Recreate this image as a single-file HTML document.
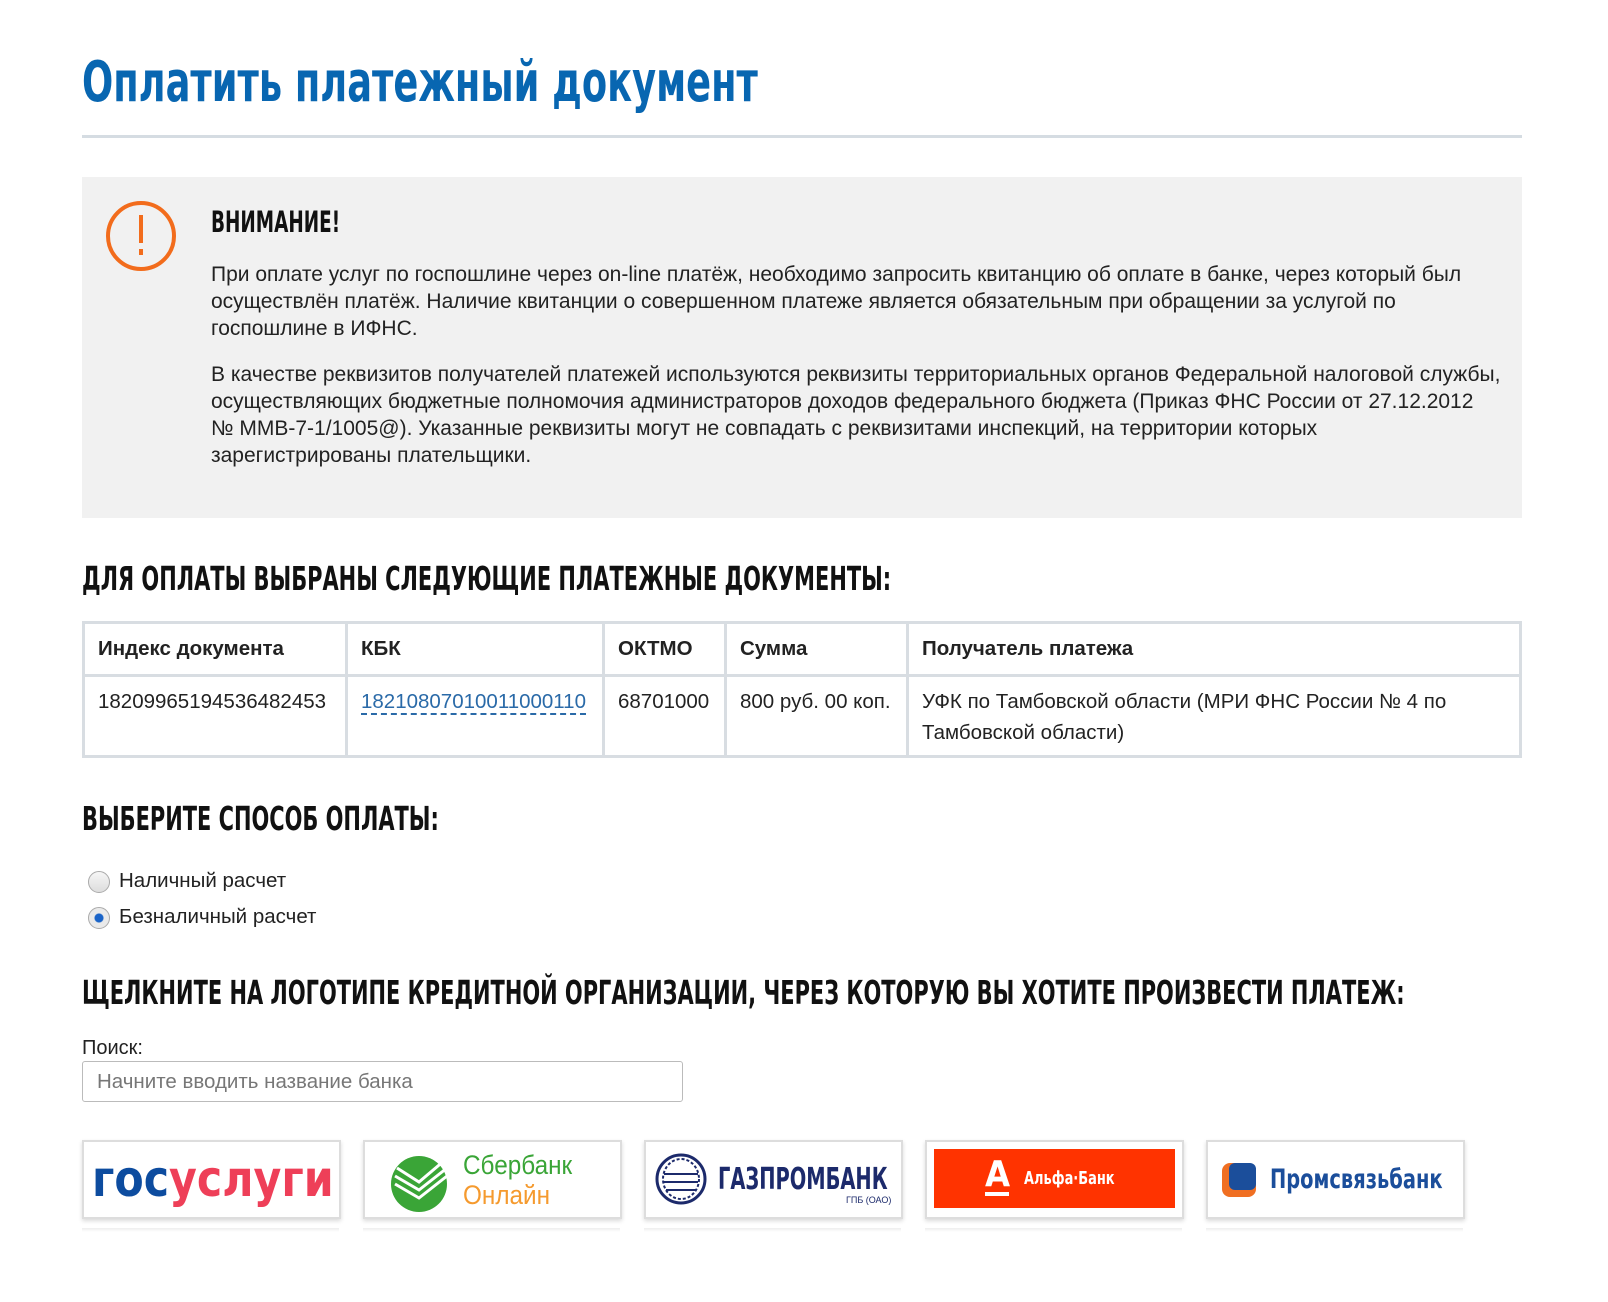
<!DOCTYPE html>
<html><head><meta charset="utf-8"><style>
body{margin:0;background:#fff;width:1608px;height:1302px;position:relative;font-family:"Liberation Sans",sans-serif;color:#222;overflow:hidden}
.a{position:absolute}
.cond{font-family:"DejaVu Sans Condensed","DejaVu Sans",sans-serif;font-weight:bold;transform-origin:0 0;white-space:nowrap}
h1{margin:0;color:#0866b1;font-size:56px;transform:scaleX(0.73)}
.h2{font-size:33px;color:#111;transform:scaleX(0.705)}
p{margin:0;font-size:21px;line-height:27px;color:#222;white-space:nowrap}
table{border-collapse:collapse;font-size:20.5px;table-layout:fixed}
td{border:3px solid #d8dde2;padding:0 13px;vertical-align:top;white-space:nowrap}
.logo{position:absolute;top:1140px;width:255px;height:75px;border:2px solid #ddd;box-shadow:0 2px 4px rgba(0,0,0,.15);background:#fff;overflow:hidden}
.ghost{position:absolute;top:1228px;width:257px;height:4px;background:linear-gradient(#eee,#fff)}
</style></head><body>
<h1 class="a cond" style="left:82px;top:50px">Оплатить платежный документ</h1>
<div class="a" style="left:82px;top:135px;width:1440px;height:3px;background:#d5dce2"></div>
<div class="a" style="left:82px;top:177px;width:1440px;height:341px;background:#f1f1f1"></div>
<svg class="a" style="left:104px;top:199px" width="74" height="74"><circle cx="37" cy="37" r="33" fill="none" stroke="#f26c1c" stroke-width="4"/><rect x="35" y="16" width="4" height="28" fill="#f26c1c"/><rect x="35" y="50" width="4" height="6" fill="#f26c1c"/></svg>
<div class="a cond h2" style="left:211px;top:205px;font-size:29px">ВНИМАНИЕ!</div>
<div class="a" style="left:211px;top:261px;width:1300px">
<p>При оплате услуг по госпошлине через on-line платёж, необходимо запросить квитанцию об оплате в банке, через который был<br>осуществлён платёж. Наличие квитанции о совершенном платеже является обязательным при обращении за услугой по<br>госпошлине в ИФНС.</p>
<p style="margin-top:19px">В качестве реквизитов получателей платежей используются реквизиты территориальных органов Федеральной налоговой службы,<br>осуществляющих бюджетные полномочия администраторов доходов федерального бюджета (Приказ ФНС России от 27.12.2012<br>№ ММВ-7-1/1005@). Указанные реквизиты могут не совпадать с реквизитами инспекций, на территории которых<br>зарегистрированы плательщики.</p>
</div>
<div class="a cond h2" style="left:82px;top:559px">ДЛЯ ОПЛАТЫ ВЫБРАНЫ СЛЕДУЮЩИЕ ПЛАТЕЖНЫЕ ДОКУМЕНТЫ:</div>
<table class="a" style="left:82px;top:621px;width:1440px">
<colgroup><col style="width:263px"><col style="width:257px"><col style="width:122px"><col style="width:182px"><col></colgroup>
<tr style="height:53px;font-weight:bold"><td style="vertical-align:middle">Индекс документа</td><td style="vertical-align:middle">КБК</td><td style="vertical-align:middle">ОКТМО</td><td style="vertical-align:middle">Сумма</td><td style="vertical-align:middle">Получатель платежа</td></tr>
<tr style="height:81px;line-height:31px"><td style="padding-top:9px">18209965194536482453</td><td style="padding-top:9px"><span style="color:#2a6aa8;border-bottom:2px dashed #2a6aa8">18210807010011000110</span></td><td style="padding-top:9px">68701000</td><td style="padding-top:9px">800 руб. 00 коп.</td><td style="padding-top:9px">УФК по Тамбовской области (МРИ ФНС России № 4 по<br>Тамбовской области)</td></tr>
</table>
<div class="a cond h2" style="left:82px;top:799px">ВЫБЕРИТЕ СПОСОБ ОПЛАТЫ:</div>
<div class="a" style="left:88px;top:871px;width:20px;height:20px;border-radius:50%;border:1px solid #aaa;background:linear-gradient(#f6f6f6,#ddd)"></div>
<div class="a" style="left:119px;top:869px;font-size:20.5px">Наличный расчет</div>
<div class="a" style="left:88px;top:907px;width:20px;height:20px;border-radius:50%;border:1px solid #aaa;background:radial-gradient(circle,#1a64c8 0 4px,#eaeaea 5px)"></div>
<div class="a" style="left:119px;top:905px;font-size:20.5px">Безналичный расчет</div>
<div class="a cond h2" style="left:82px;top:973px">ЩЕЛКНИТЕ НА ЛОГОТИПЕ КРЕДИТНОЙ ОРГАНИЗАЦИИ, ЧЕРЕЗ КОТОРУЮ ВЫ ХОТИТЕ ПРОИЗВЕСТИ ПЛАТЕЖ:</div>
<div class="a" style="left:82px;top:1037px;font-size:20px">Поиск:</div>
<div class="a" style="left:82px;top:1061px;border:1px solid #bbb;border-radius:3px;font-size:20.5px;color:#777;line-height:39px;box-sizing:border-box;padding-left:14px;width:601px;height:41px">Начните вводить название банка</div>
<div class="logo" style="left:82px"><div class="a cond" style="left:8px;top:8px;font-size:50px;transform:scaleX(0.95)"><span style="color:#0d4c9f">гос</span><span style="color:#ee3f58">услуги</span></div></div>
<div class="logo" style="left:363px"><svg class="a" style="left:22px;top:8px" width="64" height="64"><circle cx="32" cy="34" r="28" fill="#3aa537"/><path d="M10 18l22 14 26-22M8 26l24 14 28-22M8 34l24 14 28-22" stroke="#fff" stroke-width="3" fill="none"/></svg><div class="a" style="left:98px;top:8px;font-size:27px;line-height:30px;transform:scaleX(.9);transform-origin:0 0;white-space:nowrap"><span style="color:#3aa537">Сбербанк</span><br><span style="color:#f59a2e">Онлайн</span></div></div>
<div class="logo" style="left:644px"><svg class="a" style="left:8px;top:10px" width="54" height="54"><circle cx="27" cy="27" r="24" fill="none" stroke="#1c2a6b" stroke-width="3"/><ellipse cx="27" cy="27" rx="18" ry="20" fill="none" stroke="#1c2a6b" stroke-width="2" stroke-dasharray="3 2"/><path d="M10 22h34M10 30h34M12 38h30" stroke="#1c2a6b" stroke-width="2"/></svg><div class="a cond" style="left:72px;top:20px;font-size:30px;color:#1c2a6b;transform:scaleX(.72)">ГАЗПРОМБАНК</div><div class="a" style="left:200px;top:53px;font-size:9px;color:#1c2a6b">ГПБ (ОАО)</div></div>
<div class="logo" style="left:925px"><div class="a" style="left:7px;top:7px;width:241px;height:59px;background:#ff3300"></div><div class="a cond" style="left:58px;top:12px;font-size:36px;color:#fff">А</div><div class="a" style="left:58px;top:50px;width:24px;height:4px;background:#fff"></div><div class="a cond" style="left:97px;top:26px;font-size:18px;color:#fff;transform:scaleX(.8)">Альфа·Банк</div></div>
<div class="logo" style="left:1206px"><div class="a" style="left:14px;top:21px;width:34px;height:34px;border-radius:8px;background:#f06f22"></div><div class="a" style="left:21px;top:21px;width:27px;height:27px;border-radius:6px;background:#1b4e9b"></div><div class="a cond" style="left:62px;top:22px;font-size:27px;color:#1b4e9b;transform:scaleX(.8)">Промсвязьбанк</div></div>
<div class="ghost" style="left:82px"></div><div class="ghost" style="left:363px"></div><div class="ghost" style="left:644px"></div><div class="ghost" style="left:925px"></div><div class="ghost" style="left:1206px"></div>
</body></html>
